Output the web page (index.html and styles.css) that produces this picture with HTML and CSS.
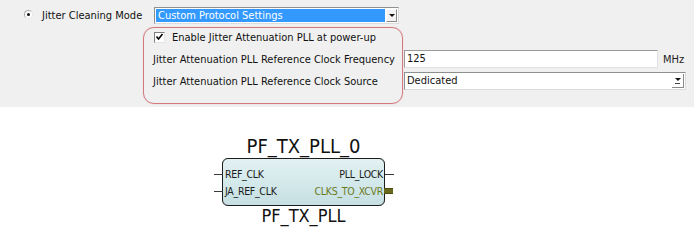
FILE: index.html
```html
<!DOCTYPE html>
<html>
<head>
<meta charset="utf-8">
<link rel="stylesheet" href="styles.css">
</head>
<body>
<section class="panel">
  <div class="mode-row">
    <span class="radio"><span class="radio-dot"></span></span>
    <span class="mode-label">Jitter Cleaning Mode</span>
    <div class="combo combo-mode">
      <span class="combo-value selected">Custom Protocol Settings</span>
      <span class="combo-btn"><span class="tri"></span></span>
    </div>
  </div>

  <div class="sub-grid">
    <div class="check-row">
      <span class="checkbox">
        <svg width="9" height="9" viewBox="0 0 9 9"><path d="M1.5 3.5 L3.5 6 L7.5 1" fill="none" stroke="#000" stroke-width="1.6"/></svg>
      </span>
      <span>Enable Jitter Attenuation PLL at power-up</span>
    </div>
    <span class="field-label">Jitter Attenuation PLL Reference Clock Frequency</span>
    <div class="field-line">
      <div class="textbox">125</div>
      <span class="unit">MHz</span>
    </div>
    <span class="field-label">Jitter Attenuation PLL Reference Clock Source</span>
    <div class="combo combo-source">
      <span class="combo-value">Dedicated</span>
      <span class="combo-btn flat"><span class="tri"></span><span class="tri-bar"></span></span>
    </div>
    <div class="highlight" aria-hidden="true"></div>
  </div>
</section>

<section class="canvas">
  <div class="symbol">
    <div class="sym-title">PF_TX_PLL_0</div>
    <div class="sym-box">
      <div class="port-row">
        <span class="port in"><span class="pin pin-left"></span>REF_CLK</span>
        <span class="port out">PLL_LOCK<span class="pin pin-right"></span></span>
      </div>
      <div class="port-row">
        <span class="port in"><span class="pin pin-left"></span>JA_REF_CLK</span>
        <span class="port out bus">CLKS_TO_XCVR<span class="bus-pin"></span></span>
      </div>
    </div>
    <div class="sym-type">PF_TX_PLL</div>
  </div>
</section>
</body>
</html>
```
FILE: styles.css
```css
* { box-sizing: border-box; }

body {
  margin: 0;
  background: #ffffff;
  font-family: "DejaVu Sans Condensed", "DejaVu Sans", sans-serif;
  font-size: 11px;
  color: #111;
}

/* ---------- settings panel ---------- */
.panel {
  background: #f0f0f0;
  height: 107px;
  padding-top: 7px;
}

.mode-row {
  display: flex;
  align-items: center;
  height: 17px;
  padding-left: 24px;
}

.radio {
  width: 9px;
  height: 9px;
  border-radius: 50%;
  background: #fff;
  border: 1px solid #a8a8a8;
  border-bottom-color: #e6e6e6;
  border-right-color: #e6e6e6;
  display: flex;
  align-items: center;
  justify-content: center;
  margin-top: -3px;
}
.radio-dot {
  width: 3px;
  height: 3px;
  border-radius: 50%;
  background: #111;
}

.mode-label {
  margin-left: 9px;
  width: 112px;
  white-space: nowrap;
}

.combo {
  position: relative;
  display: flex;
  align-items: stretch;
  background: #fff;
  border: 1px solid #8e8f8f;
  border-bottom-color: #dcdcdc;
  border-right-color: #dcdcdc;
  height: 18px;
  padding: 1px;
}
.combo-mode {
  width: 245px;
  height: 17px;
}
.combo-value {
  flex: 1;
  padding-left: 2px;
  line-height: 13px;
  white-space: nowrap;
  overflow: hidden;
}
.combo-value.selected {
  background: #3399ff;
  color: #fff;
  margin-right: 1px;
}
.combo-btn {
  width: 11px;
  background: #f3f3f3;
  border: 1px solid #fff;
  border-right-color: #8a8a8a;
  border-bottom-color: #8a8a8a;
  display: flex;
  flex-direction: column;
  align-items: center;
  justify-content: center;
}
.combo-btn.flat {
  background: #fff;
  border: none;
  width: 12px;
  border-right: 1px solid #8a8a8a;
  border-bottom: 1px solid #8a8a8a;
}
.tri {
  width: 0;
  height: 0;
  border-left: 3px solid transparent;
  border-right: 3px solid transparent;
  border-top: 3px solid #111;
}
.tri-bar {
  width: 5px;
  height: 1px;
  background: #444;
  margin-top: 2px;
}

.sub-grid {
  position: relative;
  display: grid;
  grid-template-columns: 251px 282px;
  grid-template-rows: 18px 18px 18px;
  row-gap: 4px;
  margin: 4px 0 0 153px;
  align-items: center;
}

.check-row {
  grid-column: 1 / 3;
  display: flex;
  align-items: center;
  gap: 7px;
  padding-left: 1px;
}
.checkbox {
  width: 11px;
  height: 11px;
  background: #fff;
  border: 1px solid #7d7d7d;
  border-right-color: #e4e4e4;
  border-bottom-color: #e4e4e4;
  display: flex;
  align-items: center;
  justify-content: center;
}

.field-label { white-space: nowrap; }

.field-line {
  display: flex;
  align-items: center;
  gap: 5px;
}
.textbox {
  width: 254px;
  height: 18px;
  background: #fff;
  border: 1px solid #9a9a9a;
  border-right-color: #e2e2e2;
  border-bottom-color: #e2e2e2;
  padding-left: 2px;
  line-height: 16px;
}
.unit { color: #222; }

.combo-source {
  width: 282px;
  padding: 1px 1px 1px 2px;
}
.combo-source .combo-value { line-height: 14px; padding-left: 0; }

.highlight {
  position: absolute;
  left: -10px;
  top: -1px;
  width: 260px;
  height: 77px;
  border: 1px solid #d4787f;
  border-radius: 11px;
  box-shadow: 0 0 1px rgba(214, 120, 127, 0.6);
  pointer-events: none;
}

/* ---------- diagram ---------- */
.canvas {
  height: 133px;
  background: #fff;
  padding-top: 28px;
}

.symbol {
  margin-left: 222px;
  width: 163px;
  display: flex;
  flex-direction: column;
  align-items: center;
}

.sym-title {
  font-size: 20px;
  line-height: 22px;
  color: #111;
  white-space: nowrap;
  margin-bottom: 1px;
}

.sym-box {
  width: 163px;
  height: 48px;
  border: 1px solid #1c1c1c;
  box-shadow: 0 0 0.6px #000;
  border-radius: 6px;
  background: linear-gradient(180deg, #e3f1f2 0%, #d4e9eb 50%, #c6dfe2 100%);
  padding: 6px 1px 0 1px;
  display: flex;
  flex-direction: column;
}

.port-row {
  display: flex;
  justify-content: space-between;
  align-items: center;
  height: 17px;
  font-size: 10.5px;
  letter-spacing: -0.3px;
  color: #1b1b1b;
}
.port {
  position: relative;
  white-space: nowrap;
}
.port.in { padding-left: 1px; }
.port.bus { color: #6a7a1c; }

.pin {
  position: absolute;
  top: 50%;
  height: 1px;
  width: 9px;
  background: #3a3a3a;
}
.pin-left { left: -10px; }
.pin-right { right: -11px; }

.bus-pin {
  position: absolute;
  top: 50%;
  right: -10px;
  width: 9px;
  height: 6px;
  margin-top: -3px;
  background: #6b6a1c;
  border-top: 1px solid #4f4d10;
  border-bottom: 1px solid #4f4d10;
}

.sym-type {
  font-size: 18px;
  line-height: 20px;
  color: #111;
  white-space: nowrap;
}
```
